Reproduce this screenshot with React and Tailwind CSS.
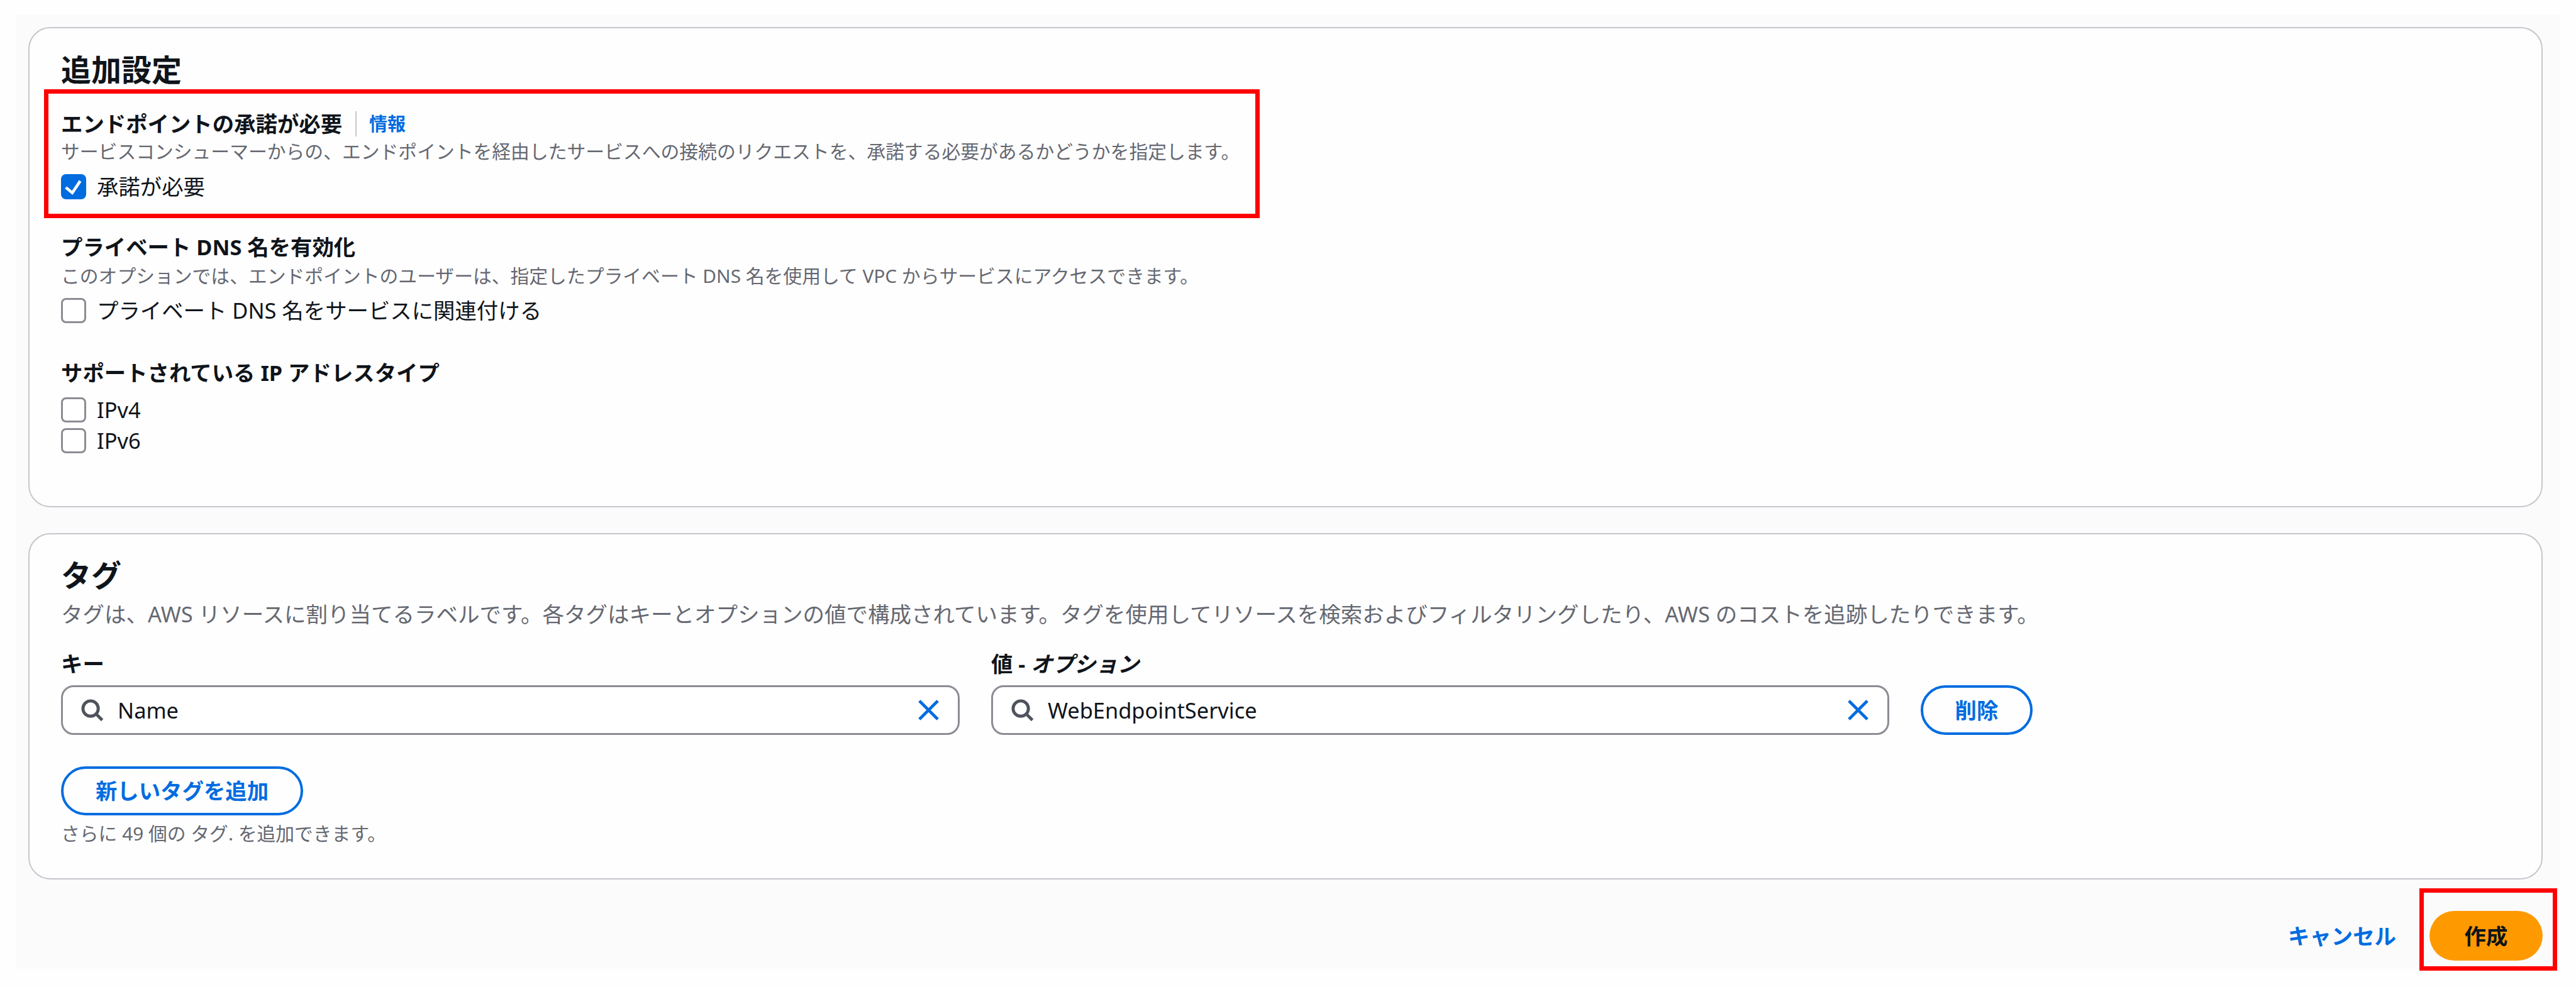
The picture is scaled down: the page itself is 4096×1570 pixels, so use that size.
// App.jsx — VPC endpoint service form: additional settings + tags

import React from 'react';

const FONT = 'font-["Noto_Sans","Noto_Sans_CJK_JP",sans-serif]';

function SearchIcon() {
  return (
    <svg viewBox="0 0 16 16" className="w-[39px] h-[39px] shrink-0" fill="none" stroke="#4f535c" strokeWidth="2">
      <circle cx="7" cy="7" r="5" />
      <path d="M10.6 10.6 14.6 14.6" />
    </svg>
  );
}

function ClearIcon() {
  return (
    <svg viewBox="0 0 16 16" className="w-[39px] h-[39px] shrink-0" fill="none" stroke="#006ce0" strokeWidth="2">
      <path d="m2 2 12 12M14 2 2 14" />
    </svg>
  );
}

function Checkbox({ label, checked }) {
  return (
    <label className="flex items-center h-[49px] text-[34.4px] leading-[49px] text-[#0f141a]">
      {checked ? (
        <span className="w-[40px] h-[40px] rounded-[8px] bg-[#006ce0] shrink-0 flex items-center justify-center">
          <svg viewBox="0 0 14 14" className="w-[40px] h-[40px]" fill="none" stroke="#ffffff" strokeWidth="1.6">
            <path d="M2.7 7.4 6.3 10.4 10.7 3.8" />
          </svg>
        </span>
      ) : (
        <span className="w-[40px] h-[40px] rounded-[8px] border-[3px] border-[#8c8c94] bg-white shrink-0"></span>
      )}
      <span className="ml-[17px]">{label}</span>
    </label>
  );
}

function TagInput({ value, width }) {
  return (
    <div className={`${width} h-[79px] rounded-[20px] border-[3px] border-[#8c8c94] bg-white flex items-center pl-[27px] pr-[27px]`}>
      <SearchIcon />
      <span className="ml-[21px] flex-1 text-[34.4px] text-[#0f141a]">{value}</span>
      <ClearIcon />
    </div>
  );
}

function App() {
  return (
    <div className={`${FONT} w-[4096px] h-[1570px] bg-[#fefefe] pt-[24px] pl-[25px] pr-[25px] pb-[29px]`}>
      <div className="h-full bg-[#fbfbfc] pt-[19px] pl-[20px] pr-[28px]">

        {/* Additional settings */}
        <div className="h-[764px] rounded-[35px] border-[2px] border-[#c6c6cd] bg-[#fefefe] pl-[50px] pt-[35px]">
          <h2 className="text-[48px] leading-[61px] font-bold text-[#0f141a]">追加設定</h2>

          <div className="relative mt-[31px]">
            <div className="flex items-center h-[49px]">
              <span className="text-[34.4px] leading-[49px] font-bold text-[#0f141a]">エンドポイントの承諾が必要</span>
              <span className="ml-[21px] w-[2px] h-[40px] bg-[#c6c6cd]"></span>
              <span className="ml-[20px] text-[29px] font-bold text-[#006ce0]">情報</span>
            </div>
            <p className="text-[29.8px] leading-[39px] text-[#656871]">サービスコンシューマーからの、エンドポイントを経由したサービスへの接続のリクエストを、承諾する必要があるかどうかを指定します。</p>
            <div className="mt-[12px]">
              <Checkbox label="承諾が必要" checked />
            </div>
            {/* red annotation */}
            <div className="absolute left-[-27px] top-[-30px] w-[1933px] h-[205px] border-[7px] border-[#ff0000]"></div>
          </div>

          <div className="mt-[47px]">
            <div className="text-[34.4px] leading-[49px] font-bold text-[#0f141a]">プライベート DNS 名を有効化</div>
            <p className="text-[29.8px] leading-[39px] mt-[2px] text-[#656871]">このオプションでは、エンドポイントのユーザーは、指定したプライベート DNS 名を使用して VPC からサービスにアクセスできます。</p>
            <div className="mt-[11px]">
              <Checkbox label="プライベート DNS 名をサービスに関連付ける" />
            </div>
          </div>

          <div className="mt-[50px]">
            <div className="text-[34.4px] leading-[49px] font-bold text-[#0f141a]">サポートされている IP アドレスタイプ</div>
            <div className="mt-[10px] flex flex-col">
              <Checkbox label="IPv4" />
              <Checkbox label="IPv6" />
            </div>
          </div>
        </div>

        {/* Tags */}
        <div className="mt-[41px] h-[551px] rounded-[35px] border-[2px] border-[#c6c6cd] bg-[#fefefe] pl-[50px] pt-[34px]">
          <h2 className="text-[48px] leading-[61px] font-bold text-[#0f141a]">タグ</h2>
          <p className="mt-[12px] text-[34.5px] leading-[39px] text-[#656871]">タグは、AWS リソースに割り当てるラベルです。各タグはキーとオプションの値で構成されています。タグを使用してリソースを検索およびフィルタリングしたり、AWS のコストを追跡したりできます。</p>

          <div className="mt-[35px] flex items-end gap-[50px]">
            <div>
              <div className="text-[34.4px] leading-[49px] font-bold text-[#0f141a] mb-[10px]">キー</div>
              <TagInput value="Name" width="w-[1429px]" />
            </div>
            <div>
              <div className="text-[34.4px] leading-[49px] font-bold text-[#0f141a] mb-[10px]">値 - <i>オプション</i></div>
              <TagInput value="WebEndpointService" width="w-[1428px]" />
            </div>
            <button className="w-[178px] h-[79px] rounded-full border-[4px] border-[#006ce0] text-[34.4px] font-bold text-[#006ce0]">削除</button>
          </div>

          <button className="mt-[50px] w-[385px] h-[78px] rounded-full border-[4px] border-[#006ce0] text-[34.4px] font-bold text-[#006ce0] block">新しいタグを追加</button>
          <p className="mt-[9px] text-[29.8px] leading-[39px] text-[#656871]">さらに 49 個の タグ. を追加できます。</p>
        </div>

        {/* Footer actions */}
        <div className="mt-[50px] flex justify-end items-center gap-[53px]">
          <span className="text-[34.4px] font-bold text-[#006ce0]">キャンセル</span>
          <div className="relative">
            <button className="block w-[180px] h-[79px] rounded-full bg-[#ff9900] text-[34.4px] font-bold text-[#0f141a]">作成</button>
            {/* red annotation */}
            <div className="absolute left-[-16px] top-[-36px] w-[219px] h-[131px] border-[7px] border-[#ff0000]"></div>
          </div>
        </div>
      </div>
    </div>
  );
}

export default App;
